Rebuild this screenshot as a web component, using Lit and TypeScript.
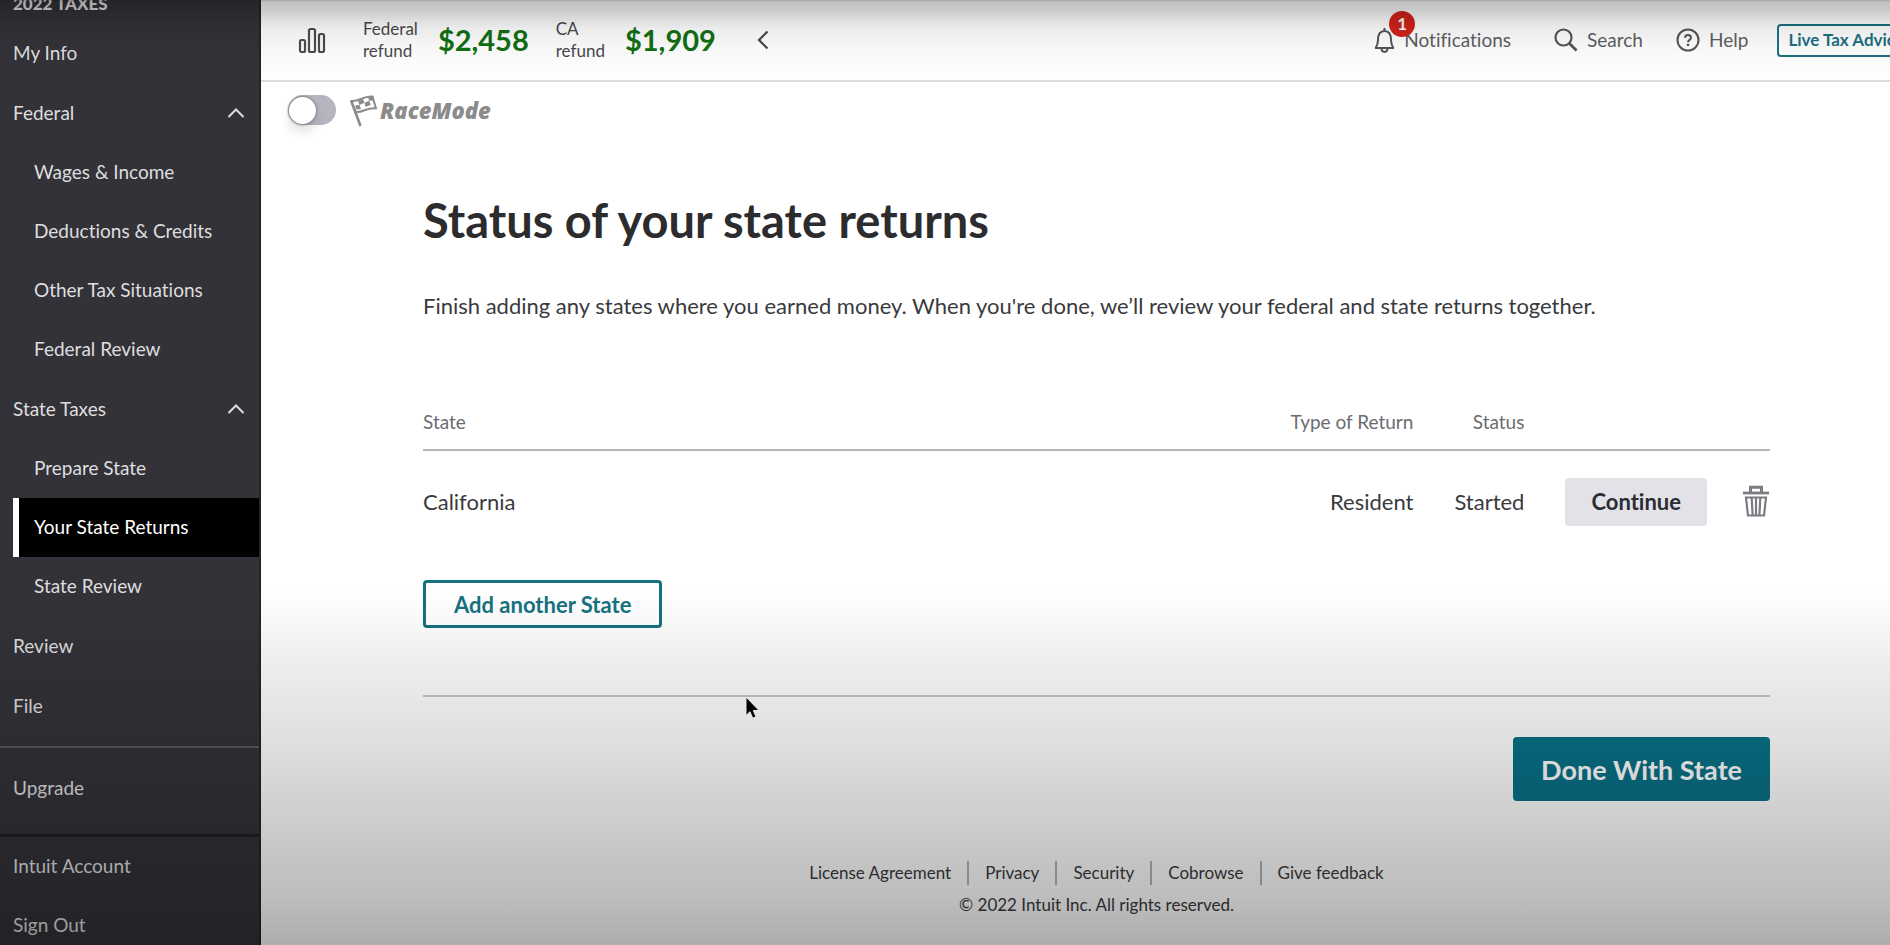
import { LitElement, html, css, svg, nothing } from "lit";
import { customElement, property } from "lit/decorators.js";
import { classMap } from "lit/directives/class-map.js";

interface NavItem {
  label: string;
  active?: boolean;
  children?: NavItem[];
}

const NAV: NavItem[] = [
  { label: "My Info" },
  {
    label: "Federal",
    children: [
      { label: "Wages & Income" },
      { label: "Deductions & Credits" },
      { label: "Other Tax Situations" },
      { label: "Federal Review" },
    ],
  },
  {
    label: "State Taxes",
    children: [
      { label: "Prepare State" },
      { label: "Your State Returns", active: true },
      { label: "State Review" },
    ],
  },
  { label: "Review" },
  { label: "File" },
];

const FOOTER_LINKS = ["License Agreement", "Privacy", "Security", "Cobrowse", "Give feedback"];

const chevronUp = svg`<svg width="18" height="12" viewBox="0 0 18 12" fill="none" stroke="currentColor" stroke-width="2" aria-hidden="true"><path d="M1.500 10 9 2.500 16.500 10"/></svg>`;

@customElement("side-nav")
class SideNav extends LitElement {
  static styles = css`
    :host {
      display: flex;
      flex-direction: column;
      flex: none;
      box-sizing: border-box;
      width: 261px;
      background: #333238;
      border-right: 2px solid #242424;
      overflow: hidden;
      color: #dededf;
      font-size: 19px;
      line-height: 24px;
    }
    .title {
      flex: none;
      height: 24px;
      margin: -8px 0;
      padding: 0 0 16px 13px;
      font-size: 17px;
      font-weight: 900;
    }
    .group {
      margin-bottom: 1px;
    }
    a,
    button {
      display: flex;
      align-items: center;
      justify-content: space-between;
      box-sizing: border-box;
      width: 100%;
      height: 59px;
      padding: 0 14px 2px 13px;
      border: 0;
      background: none;
      color: inherit;
      font: inherit;
      text-align: left;
      text-decoration: none;
    }
    .children a {
      padding-left: 34px;
    }
    .children a.active {
      width: auto;
      margin-left: 13px;
      padding-left: 15px;
      border-left: 6px solid #fff;
      background: #000;
      color: #fff;
    }
    .upgrade {
      padding: 11px 0 16px;
      margin-top: 9px;
      border-top: 2px solid #5a5a5d;
      border-bottom: 3px solid #202020;
    }
  `;

  private item(i: NavItem) {
    if (!i.children) {
      return html`<div class="group"><a href="#">${i.label}</a></div>`;
    }
    return html`<div class="group">
      <button type="button" aria-expanded="true">${i.label} ${chevronUp}</button>
      <div class="children">
        ${i.children.map(
          (c) => html`<a href="#" class=${classMap({ active: !!c.active })} aria-current=${c.active ? "page" : nothing}>${c.label}</a>`,
        )}
      </div>
    </div>`;
  }

  render() {
    return html`
      <div class="title">2022 TAXES</div>
      <nav>${NAV.map((i) => this.item(i))}</nav>
      <div class="upgrade"><a href="#">Upgrade</a></div>
      <div><a href="#">Intuit Account</a><a href="#">Sign Out</a></div>
    `;
  }
}

@customElement("refund-amount")
class RefundAmount extends LitElement {
  @property() region = "";
  @property() amount = "";

  static styles = css`
    :host {
      display: flex;
      align-items: center;
    }
    .label {
      margin-right: 20px;
      font-size: 17px;
      line-height: 22px;
      color: #47484c;
    }
    .label span {
      display: block;
    }
    .amount {
      font-size: 29px;
      line-height: 34px;
      font-weight: 700;
      color: #127012;
    }
  `;

  render() {
    return html`
      <div class="label"><span>${this.region}</span><span>refund</span></div>
      <div class="amount">${this.amount}</div>
    `;
  }
}

@customElement("top-bar")
class TopBar extends LitElement {
  static styles = css`
    :host {
      display: flex;
      align-items: center;
      flex: none;
      height: 80px;
      padding-left: 37px;
      border-bottom: 2px solid #dcdcdc;
      overflow: hidden;
      color: #5d5e62;
      font-size: 19px;
      line-height: 24px;
    }
    svg {
      flex: none;
      display: block;
    }
    button {
      display: flex;
      align-items: center;
      gap: 9px;
      padding: 0;
      border: 0;
      background: none;
      color: inherit;
      font: inherit;
    }
    .refunds {
      display: flex;
      gap: 27px;
      margin: 0 41px 0 37px;
    }
    .tools {
      display: flex;
      flex: none;
      align-items: center;
      margin: 0 -27px 0 auto;
    }
    .bell {
      position: relative;
      margin-right: 43px;
    }
    .badge {
      position: absolute;
      left: 15px;
      top: -16px;
      width: 26px;
      height: 26px;
      border-radius: 50%;
      background: #d3221a;
      color: #fff;
      font-size: 17px;
      line-height: 26px;
      font-weight: 700;
      text-align: center;
    }
    .search {
      margin-right: 33px;
    }
    .help {
      margin-right: 29px;
    }
    .live {
      height: 33px;
      padding: 0 11px 0 9px;
      border: 2px solid #1c7182;
      border-radius: 4px;
      color: #1c7182;
      font-size: 17px;
      font-weight: 700;
      white-space: nowrap;
    }
  `;

  render() {
    return html`
      <svg width="28" height="28" viewBox="0 0 28 28" fill="none" stroke="#4b4c50" stroke-width="2.200" aria-hidden="true">
        <rect x="2" y="14" width="5" height="12" rx="1.500" />
        <rect x="11" y="3" width="6" height="23" rx="1.500" />
        <rect x="21" y="8" width="5" height="18" rx="1.500" />
      </svg>
      <div class="refunds">
        <refund-amount region="Federal" amount="$2,458"></refund-amount>
        <refund-amount region="CA" amount="$1,909"></refund-amount>
      </div>
      <button type="button" aria-label="Collapse refunds">
        <svg width="12" height="20" viewBox="0 0 12 20" fill="none" stroke="#47484c" stroke-width="2.200"><path d="M10.500 1.500 2 10l8.500 8.500" /></svg>
      </button>
      <div class="tools">
        <button type="button" class="bell">
          <svg width="21" height="26" viewBox="0 0 21 26" fill="none" stroke="#54555a" stroke-width="2" stroke-linejoin="round" aria-hidden="true">
            <path d="M10.500 1v2.500M4 13c0-5.500 2-9 6.500-9s6.500 3.500 6.500 9c0 3.500.8 5.500 2.300 8H1.700C3.200 18.500 4 16.500 4 13Z" />
            <path d="M7.500 21.500c0 4.500 6 4.500 6 0" />
          </svg>
          <span>Notifications</span>
          <span class="badge">1</span>
        </button>
        <button type="button" class="search">
          <svg width="24" height="24" viewBox="0 0 24 24" fill="none" stroke="#54555a" aria-hidden="true">
            <circle cx="9.500" cy="9.500" r="8" stroke-width="2.200" />
            <path d="M15.500 15.500 22.500 22.500" stroke-width="2.800" />
          </svg>
          Search
        </button>
        <button type="button" class="help">
          <svg width="24" height="24" viewBox="0 0 24 24" fill="none" stroke="#54555a" stroke-width="2" aria-hidden="true">
            <circle cx="12" cy="12" r="10.500" />
            <path d="M9 9.800c0-3.900 6-3.900 6 0 0 2.200-3 2-3 4.400" />
            <path d="M12 15.800v2.200" stroke-width="2.400" />
          </svg>
          Help
        </button>
        <button type="button" class="live">Live Tax Advice</button>
      </div>
    `;
  }
}

@customElement("race-toggle")
class RaceToggle extends LitElement {
  static styles = css`
    label {
      display: flex;
      align-items: center;
      height: 56px;
      padding: 0 0 2px 27px;
      color: #8b8b8b;
    }
    input {
      display: grid;
      align-items: center;
      appearance: none;
      box-sizing: border-box;
      flex: none;
      width: 48px;
      height: 30px;
      margin: 0 14px 0 0;
      border-radius: 15px;
      background: #b6b4bf;
    }
    input::before {
      content: "";
      width: 27px;
      height: 27px;
      margin-left: 1px;
      border-radius: 50%;
      background: #fff;
      box-shadow: 0 0 2px 1px #85848c, 0 8px 12px rgba(0, 0, 0, 0.12);
    }
    .name {
      margin-left: 3px;
      font-family: "Open Sans", sans-serif;
      font-size: 22px;
      line-height: 24px;
      font-weight: 800;
      font-style: italic;
    }
  `;

  render() {
    return html`<label>
      <input type="checkbox" role="switch" />
      <svg width="27" height="33" viewBox="0 0 27 33" fill="none" stroke="currentColor" stroke-width="2" aria-hidden="true">
        <path d="M1 6.500 10.500 32" stroke-width="2.600" />
        <path d="M1.500 7C9 8 13 1.500 22.500 2.500L26 14.500C17 13 13 19 5.500 18Z" stroke-linejoin="round" />
        <path d="M8 7l5-2.500 1.400 4.300L9.500 11ZM18 3l4.500-.500 1.300 4-4.600.3ZM14.400 8.800l4.800-2 1.500 4-5 2.200ZM5 11.500l4.500-.5 1.500 4-4.500.5Z" fill="currentColor" stroke="none" />
      </svg>
      <span class="name">RaceMode</span>
    </label>`;
  }
}

@customElement("state-returns")
class StateReturns extends LitElement {
  static styles = css`
    :host {
      display: block;
      padding: 48px 120px 0 162px;
      color: #393a3d;
    }
    h1 {
      margin: 0;
      font-size: 47px;
      line-height: 64px;
      font-weight: 700;
      color: #2c2c2f;
    }
    .lead {
      margin: 38px 0 0;
      font-size: 22px;
      line-height: 32px;
    }
    table {
      width: 100%;
      margin-top: 82px;
      border-collapse: collapse;
      font-size: 22px;
      line-height: 28px;
    }
    th {
      height: 46px;
      padding: 0 0 10px;
      box-sizing: border-box;
      border-bottom: 2px solid #b4b5b7;
      font-size: 19px;
      font-weight: 400;
      text-align: left;
      color: #6b6c72;
    }
    td {
      height: 102px;
      padding: 0;
    }
    th.fit,
    td.fit {
      width: 1px;
      white-space: nowrap;
      text-align: right;
      padding-left: 41px;
    }
    button {
      box-sizing: border-box;
      border: 0;
      border-radius: 4px;
      font: inherit;
      font-size: 22px;
      font-weight: 700;
    }
    .continue {
      display: block;
      height: 48px;
      padding: 0 26px;
      background: #e3e2e8;
      color: #2c2c33;
    }
    th.last,
    td.last {
      padding: 0 1px 0 36px;
    }
    .trash {
      display: block;
      padding: 0 0 2px;
      background: none;
      color: #7b7c82;
    }
    .trash svg {
      display: block;
    }
    .add {
      height: 48px;
      margin: 27px 0 67px;
      padding: 0 28px;
      border: 3px solid #16717f;
      background: #fff;
      color: #16717f;
    }
    .actions {
      display: flex;
      justify-content: flex-end;
      padding-top: 40px;
      border-top: 2px solid #c8c8ca;
    }
    .done {
      height: 64px;
      padding: 0 28px;
      background: #087187;
      color: #fff;
      font-size: 27px;
    }
    footer {
      padding: 60px 0 28px;
      text-align: center;
      font-size: 17px;
      line-height: 24px;
    }
    .links {
      display: flex;
      justify-content: center;
    }
    .links a {
      padding: 0 16px;
      color: inherit;
      text-decoration: none;
    }
    .links a + a {
      border-left: 2px solid #b4b4b6;
    }
    .legal {
      margin: 8px 0 0;
    }
  `;

  render() {
    return html`
      <h1>Status of your state returns</h1>
      <p class="lead">
        Finish adding any states where you earned money. When you're done, we’ll review your federal and state returns together.
      </p>
      <table>
        <thead>
          <tr>
            <th scope="col">State</th>
            <th scope="col" class="fit">Type of Return</th>
            <th scope="col" class="fit">Status</th>
            <th class="fit"></th>
            <th class="fit last"></th>
          </tr>
        </thead>
        <tbody>
          <tr>
            <td>California</td>
            <td class="fit">Resident</td>
            <td class="fit">Started</td>
            <td class="fit"><button type="button" class="continue">Continue</button></td>
            <td class="fit last">
              <button type="button" class="trash" aria-label="Delete California return">
                <svg width="26" height="32" viewBox="0 0 26 32" fill="none" stroke="currentColor" stroke-width="2.200">
                  <path d="M0 8h26" stroke-width="2.800" />
                  <path d="M7.500 8V2.200h11V8" stroke-width="3" />
                  <path d="M3 12.500h20L21 30.500H5ZM8.700 13l.9 17M13 13v17M17.300 13l-.9 17" />
                </svg>
              </button>
            </td>
          </tr>
        </tbody>
      </table>
      <button type="button" class="add">Add another State</button>
      <div class="actions"><button type="button" class="done">Done With State</button></div>
      <footer>
        <div class="links">${FOOTER_LINKS.map((l) => html`<a href="#">${l}</a>`)}</div>
        <p class="legal">© 2022 Intuit Inc. All rights reserved.</p>
      </footer>
    `;
  }
}

@customElement("app-root")
class AppRoot extends LitElement {
  static styles = css`
    :host {
      position: relative;
      display: flex;
      height: 100vh;
      overflow: hidden;
      background: #fff;
      font-family: Lato, "Open Sans", sans-serif;
      font-variant-ligatures: none;
    }
    main {
      flex: 1;
      min-width: 0;
      overflow: hidden;
    }
    .shade {
      position: absolute;
      inset: 0;
      pointer-events: none;
      background:
        linear-gradient(
          rgba(0, 0, 0, 0.36) 0,
          rgba(0, 0, 0, 0.24) 2px,
          rgba(0, 0, 0, 0.22) 8px,
          rgba(0, 0, 0, 0.16) 16px,
          rgba(0, 0, 0, 0.08) 28px,
          rgba(0, 0, 0, 0.03) 48px,
          transparent 78px
        ),
        linear-gradient(
          transparent 62%,
          rgba(0, 0, 0, 0.01) 64%,
          rgba(0, 0, 0, 0.06) 69%,
          rgba(0, 0, 0, 0.09) 73%,
          rgba(0, 0, 0, 0.12) 78%,
          rgba(0, 0, 0, 0.18) 85%,
          rgba(0, 0, 0, 0.23) 91%,
          rgba(0, 0, 0, 0.26) 95%,
          rgba(0, 0, 0, 0.32) 100%
        );
    }
    .pointer {
      position: absolute;
      left: 745px;
      top: 696px;
    }
  `;

  render() {
    return html`
      <side-nav></side-nav>
      <main>
        <top-bar></top-bar>
        <race-toggle></race-toggle>
        <state-returns></state-returns>
      </main>
      <div class="shade"></div>
      <svg class="pointer" width="15" height="24" viewBox="0 0 15 24" aria-hidden="true">
        <path d="M1 1v18.500l4-3.800 2.700 6.500 3.300-1.400-2.700-6.300h5.700Z" fill="#000" stroke="#e8e8e8" />
      </svg>
    `;
  }
}
